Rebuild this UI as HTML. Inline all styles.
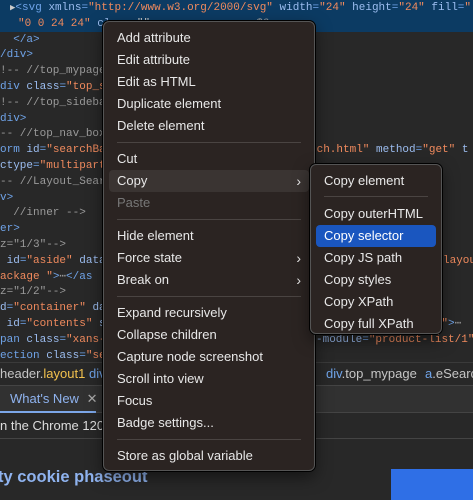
<!DOCTYPE html>
<html><head><style>
*{margin:0;padding:0;box-sizing:border-box}
body{width:473px;height:500px;overflow:hidden;background:#282828;position:relative;font-family:"Liberation Sans",sans-serif}
.code{position:absolute;left:0;top:0;width:473px;height:362px;overflow:hidden;font-family:"Liberation Mono",monospace;font-size:11px;color:#c5c5c5}
.l{position:absolute;white-space:pre;height:16px;line-height:16px}
.t{color:#6fa3e8}.a{color:#9cbdf0}.v{color:#f08a5d}.c{color:#9a9a9a}
.sel{position:absolute;left:0;top:0;width:473px;height:32px;background:#0c3b63}
.bc{position:absolute;left:0;top:362px;width:473px;height:23px;background:#282828;border-top:1px solid #3a3a3a;font-size:13px;line-height:21px;color:#c5c5c5;white-space:pre;overflow:hidden}
.bc span{position:absolute;top:0}
.tabs{position:absolute;left:0;top:385px;width:473px;height:28px;background:#313131;border-top:1px solid #444;border-bottom:1px solid #444}
.tab{position:absolute;left:0;top:0;width:96px;height:27px;border-bottom:2px solid #7ca7e8;color:#8fb3ef;font-size:13px;line-height:26px;padding-left:10px;white-space:nowrap;overflow:hidden}
.txt{position:absolute;left:0;top:413px;width:473px;height:26px;border-bottom:1px solid #444;color:#ddd;font-size:13px;line-height:26px}
.h{position:absolute;left:-2px;top:468px;color:#8fb3ef;font-weight:bold;font-size:16.5px}
.img{position:absolute;left:391px;top:469px;width:82px;height:31px;background:#2f6fe6}
.menu{position:absolute;background:#2b2422;border:1px solid #555;border-radius:6px;box-shadow:0 0 0 1px #000,0 6px 16px rgba(0,0,0,.5);color:#e8e8e8;font-size:13px}
.it{position:absolute;left:5px;right:5px;height:22px;line-height:22px;padding-left:8px;border-radius:4px;white-space:nowrap}
.sep{position:absolute;left:13px;right:13px;height:1px;background:#4a4442}
.arr{position:absolute;right:8px;top:0;font-size:14px}
</style></head><body>
<div class="sel"></div>
<div class="code">
<div class="l" style="left:10px;top:0"><span style="color:#ccc;font-size:9px">▶</span><span class="t">&lt;svg</span> <span class="a">xmlns</span><span class="t">=</span><span class="v">"http://www.w3.org/2000/svg"</span> <span class="a">width</span><span class="t">=</span><span class="v">"24"</span> <span class="a">height</span><span class="t">=</span><span class="v">"24"</span> <span class="a">fill</span><span class="t">=</span><span class="v">"</span></div>
<div class="l" style="left:18px;top:16px"><span class="v">"0 0 24 24"</span> <span class="a">class</span>=""             <span class="c">== <i>$0</i></span></div>
<div class="l t" style="left:0;top:31.6px">  &lt;/a&gt;</div>
<div class="l t" style="left:0;top:47.4px">/div&gt;</div>
<div class="l c" style="left:0;top:63.2px">!-- //top_mypage --&gt;</div>
<div class="l" style="left:0;top:79px"><span class="t">div</span> <span class="a">class</span><span class="t">=</span><span class="v">"top_sidebar"</span></div>
<div class="l c" style="left:0;top:94.8px">!-- //top_sidebar --&gt;</div>
<div class="l t" style="left:0;top:110.6px">div&gt;</div>
<div class="l c" style="left:0;top:126.4px">-- //top_nav_box --&gt;</div>
<div class="l" style="left:0;top:142.2px"><span class="t">orm</span> <span class="a">id</span><span class="t">=</span><span class="v">"searchBarForm"</span></div>
<div class="l" style="left:310px;top:142.2px"><span class="v">rch.html"</span> <span class="a">method</span><span class="t">=</span><span class="v">"get"</span> <span class="a">t</span></div>
<div class="l" style="left:0;top:158px"><span class="a">ctype</span><span class="t">=</span><span class="v">"multipart/form-data"</span></div>
<div class="l c" style="left:0;top:173.8px">-- //Layout_SearchBar --&gt;</div>
<div class="l t" style="left:0;top:189.6px">v&gt;</div>
<div class="l c" style="left:0;top:205.4px">  //inner --&gt;</div>
<div class="l t" style="left:0;top:221.2px">er&gt;</div>
<div class="l c" style="left:0;top:237px">z="1/3"--&gt;</div>
<div class="l" style="left:0;top:252.8px"> <span class="a">id</span><span class="t">=</span><span class="v">"aside"</span> <span class="a">data</span></div>
<div class="l v" style="left:443px;top:252.8px">layou</div>
<div class="l" style="left:0;top:268.6px"><span class="v">ackage "</span><span class="t">&gt;</span><span class="c">⋯</span><span class="t">&lt;/as</span></div>
<div class="l c" style="left:0;top:284.4px">z="1/2"--&gt;</div>
<div class="l" style="left:0;top:300.2px"><span class="a">d</span><span class="t">=</span><span class="v">"container"</span> <span class="a">da</span></div>
<div class="l" style="left:0;top:316px"> <span class="a">id</span><span class="t">=</span><span class="v">"contents"</span> <span class="a">s</span></div>
<div class="l" style="left:316px;top:316px"><span class="v">-mobileaction KIMB "</span><span class="t">&gt;</span><span class="c">⋯</span></div>
<div class="l" style="left:0;top:331.8px"><span class="t">pan</span> <span class="a">class</span><span class="t">=</span><span class="v">"xans-</span></div>
<div class="l" style="left:316px;top:331.8px"><span class="a">-module</span><span class="t">=</span><span class="v">"product-list/1"</span></div>
<div class="l" style="left:0;top:347.6px"><span class="t">ection</span> <span class="a">class</span><span class="t">=</span><span class="v">"se</span></div>
</div>
<div class="bc"><span style="left:0">header.<b style="color:#f2c14e;font-weight:normal">layout1</b></span><span class="t" style="left:89px">div</span><span style="left:326px"><b class="t" style="font-weight:normal">div</b>.top_mypage</span><span style="left:425px"><b class="t" style="font-weight:normal">a</b>.eSearc</span></div>
<div class="tabs"><div class="tab">What's New <span style="color:#aaa;margin-left:4px">✕</span></div></div>
<div class="txt">n the Chrome 120 u</div>
<div class="h">ty cookie phaseout</div>
<div class="img"></div>

<div class="menu" style="left:103px;top:21px;width:212px;height:450px">
<div class="it" style="top:5px">Add attribute</div>
<div class="it" style="top:27px">Edit attribute</div>
<div class="it" style="top:49px">Edit as HTML</div>
<div class="it" style="top:71px">Duplicate element</div>
<div class="it" style="top:93px">Delete element</div>
<div class="sep" style="top:120px"></div>
<div class="it" style="top:126px">Cut</div>
<div class="it" style="top:148px;background:#3a3432">Copy<span class="arr">›</span></div>
<div class="it" style="top:170px;color:#777">Paste</div>
<div class="sep" style="top:197px"></div>
<div class="it" style="top:203px">Hide element</div>
<div class="it" style="top:225px">Force state<span class="arr">›</span></div>
<div class="it" style="top:247px">Break on<span class="arr">›</span></div>
<div class="sep" style="top:274px"></div>
<div class="it" style="top:280px">Expand recursively</div>
<div class="it" style="top:302px">Collapse children</div>
<div class="it" style="top:324px">Capture node screenshot</div>
<div class="it" style="top:346px">Scroll into view</div>
<div class="it" style="top:368px">Focus</div>
<div class="it" style="top:390px">Badge settings...</div>
<div class="sep" style="top:417px"></div>
<div class="it" style="top:423px">Store as global variable</div>
</div>

<div class="menu" style="left:310px;top:164px;width:132px;height:170px">
<div class="it" style="top:5px">Copy element</div>
<div class="sep" style="top:31px"></div>
<div class="it" style="top:38px">Copy outerHTML</div>
<div class="it" style="top:60px;background:#1a56bf;color:#fff">Copy selector</div>
<div class="it" style="top:82px">Copy JS path</div>
<div class="it" style="top:104px">Copy styles</div>
<div class="it" style="top:126px">Copy XPath</div>
<div class="it" style="top:148px">Copy full XPath</div>
</div>
</body></html>
